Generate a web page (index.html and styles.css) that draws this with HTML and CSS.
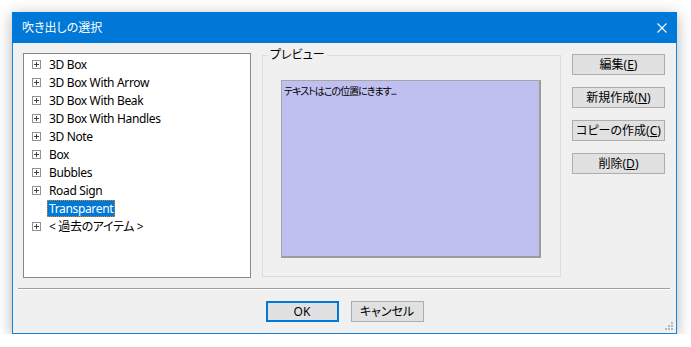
FILE: index.html
```html
<!DOCTYPE html>
<html lang="ja">
<head>
  <meta charset="UTF-8" />
  <title>吹き出しの選択</title>
  <link rel="stylesheet" href="styles.css">
</head>
<body>
  <div class="window">
    <div class="titlebar">
      <span class="title">吹き出しの選択</span>
      <svg class="close" width="10" height="10" viewBox="0 0 10 10">
        <path d="M0.5 0.5 L9.5 9.5 M9.5 0.5 L0.5 9.5" stroke="#fff" stroke-width="1.1" fill="none"/>
      </svg>
    </div>

    <div class="body">
      <div class="main">
        <!-- callout list -->
        <ul class="tree">
          <li><span class="exp"></span><span class="label">3D Box</span></li>
          <li><span class="exp"></span><span class="label">3D Box With Arrow</span></li>
          <li><span class="exp"></span><span class="label">3D Box With Beak</span></li>
          <li><span class="exp"></span><span class="label">3D Box With Handles</span></li>
          <li><span class="exp"></span><span class="label">3D Note</span></li>
          <li><span class="exp"></span><span class="label">Box</span></li>
          <li><span class="exp"></span><span class="label">Bubbles</span></li>
          <li><span class="exp"></span><span class="label">Road Sign</span></li>
          <li><span class="exp none"></span><span class="label selected">Transparent</span></li>
          <li><span class="exp"></span><span class="label">&lt; 過去のアイテム &gt;</span></li>
        </ul>

        <div class="group">
          <span class="group-label">プレビュー</span>
          <div class="preview">テキストはこの位置にきます...</div>
        </div>

        <div class="side-buttons">
          <button>編集(<u>E</u>)</button>
          <button>新規作成(<u>N</u>)</button>
          <button>コピーの作成(<u>C</u>)</button>
          <button>削除(<u>D</u>)</button>
        </div>
      </div>

      <div class="separator"></div>

      <div class="footer">
        <button class="default">OK</button>
        <button>キャンセル</button>
      </div>

      <svg class="grip" width="8" height="8" viewBox="0 0 8 8">
        <rect x="6" y="0" width="2" height="2" fill="#b8b8b8"/>
        <rect x="3" y="3" width="2" height="2" fill="#b8b8b8"/>
        <rect x="6" y="3" width="2" height="2" fill="#b8b8b8"/>
        <rect x="0" y="6" width="2" height="2" fill="#b8b8b8"/>
        <rect x="3" y="6" width="2" height="2" fill="#b8b8b8"/>
        <rect x="6" y="6" width="2" height="2" fill="#b8b8b8"/>
      </svg>
    </div>
  </div>
</body>
</html>
```

FILE: styles.css
```css
body {
  margin: 0;
  padding: 0;
  background-color: #ffffff;
  font-family: "Noto Sans", "Noto Sans CJK JP", sans-serif;
  font-size: 12px;
  font-feature-settings: "palt";
  color: #000;
}
.window {
  position: relative;
  box-sizing: border-box;
  width: 665px;
  height: 322px;
  margin: 12px 0 0 12px;
  border: 1px solid #1883d7;
  border-top: none;
  background-color: #f0f0f0;
  box-shadow: 0 3px 14px rgba(0, 0, 0, 0.3);
}
.titlebar {
  height: 31px;
  margin: 0 -1px;
  padding: 0 10px 0 10px;
  background-color: #0078d7;
  color: white;
  display: flex;
  align-items: center;
  justify-content: space-between;
}
.title {
  font-size: 12px;
  line-height: 31px;
}
.close {
  margin-top: 1px;
}
.main {
  display: flex;
  align-items: flex-start;
  height: 225px;
  padding: 10px 11px 10px 10px;
}
.tree {
  box-sizing: border-box;
  width: 228px;
  height: 225px;
  margin: 0;
  padding: 1px 0 0 0;
  list-style: none;
  background-color: #fff;
  border: 1px solid #828790;
}
.tree li {
  display: flex;
  align-items: center;
  height: 18px;
  padding-left: 8px;
}
.exp {
  box-sizing: border-box;
  position: relative;
  width: 9px;
  height: 9px;
  margin: 1px 6px 0 0;
  border: 1px solid #919191;
  background-color: #fff;
}
.exp::before,
.exp::after {
  content: "";
  position: absolute;
  background-color: #404040;
}
.exp::before {
  left: 1px;
  top: 3px;
  width: 5px;
  height: 1px;
}
.exp::after {
  left: 3px;
  top: 1px;
  width: 1px;
  height: 5px;
}
.exp.none {
  border-color: transparent;
}
.exp.none::before,
.exp.none::after {
  display: none;
}
.label {
  padding: 0 2px;
  line-height: 17px;
  letter-spacing: -0.35px;
  white-space: nowrap;
}
.label.selected {
  background-color: #0078d7;
  color: white;
  outline: 1px dotted #e08a00;
  outline-offset: -1px;
}
.group {
  box-sizing: border-box;
  width: 299px;
  height: 222px;
  margin: 2px 0 0 11px;
  border: 1px solid #dcdcdc;
}
.group-label {
  display: block;
  width: max-content;
  margin: -9px 0 0 5px;
  padding: 0 2px;
  line-height: 16px;
  background-color: #f0f0f0;
}
.preview {
  box-sizing: border-box;
  width: 260px;
  height: 178px;
  margin: 17px 0 0 18px;
  padding: 3px 0 0 2px;
  background-color: #c0c0f0;
  border: 1px solid #a6a6a6;
  border-right: 2px solid #9c9c9c;
  border-bottom: 2px solid #9c9c9c;
  font-size: 10px;
  letter-spacing: -1px;
  line-height: 14px;
}
.side-buttons {
  display: flex;
  flex-direction: column;
  gap: 12px;
  margin: 1px 0 0 11px;
}
button {
  box-sizing: border-box;
  width: 93px;
  height: 21px;
  padding: 0;
  background-color: #e1e1e1;
  border: 1px solid #adadad;
  font-family: inherit;
  font-size: 12px;
  font-feature-settings: "palt";
  color: #000;
  line-height: 18px;
}
.separator {
  margin: 0 6px 0 5px;
  border-top: 1px solid #a0a0a0;
  border-bottom: 1px solid #ffffff;
}
.footer {
  display: flex;
  justify-content: center;
  gap: 12px;
  padding-top: 11px;
}
.footer button {
  width: 73px;
}
.footer .default {
  border: 2px solid #0078d7;
  line-height: 16px;
}
.grip {
  position: absolute;
  right: 3px;
  bottom: 3px;
}
```
